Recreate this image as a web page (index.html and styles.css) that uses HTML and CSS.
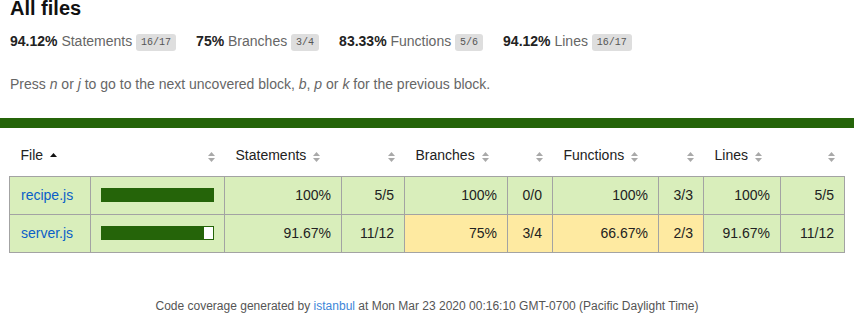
FILE: index.html
```html
<!DOCTYPE html>
<html lang="en">
<head>
<meta charset="utf-8">
<title>Code coverage report for All files</title>
<link rel="stylesheet" href="styles.css">
</head>
<body>
<div class="header">
  <h1>All files</h1>
  <div class="summary">
    <div class="stat"><span class="strong">94.12%</span> <span class="quiet">Statements</span> <span class="fraction">16/17</span></div>
    <div class="stat"><span class="strong">75%</span> <span class="quiet">Branches</span> <span class="fraction">3/4</span></div>
    <div class="stat"><span class="strong">83.33%</span> <span class="quiet">Functions</span> <span class="fraction">5/6</span></div>
    <div class="stat"><span class="strong">94.12%</span> <span class="quiet">Lines</span> <span class="fraction">16/17</span></div>
  </div>
  <p class="quiet hint">Press <em>n</em> or <em>j</em> to go to the next uncovered block, <em>b</em>, <em>p</em> or <em>k</em> for the previous block.</p>
</div>
<div class="status-line"></div>
<div class="table-wrap">
  <table class="coverage-summary">
    <colgroup>
      <col class="w-file"><col class="w-pic"><col class="w-spct"><col class="w-sabs"><col class="w-bpct"><col class="w-babs"><col class="w-fpct"><col class="w-fabs"><col class="w-lpct"><col class="w-labs">
    </colgroup>
    <thead>
      <tr>
        <th class="file">File<svg class="sorter sorted" width="7" height="10" viewBox="0 0 7 10"><polygon points="0,4 3.5,0 7,4"/></svg></th>
        <th class="pic"><svg class="sorter" width="7" height="10" viewBox="0 0 7 10"><polygon points="0,4 3.5,0 7,4"/><polygon points="0,6 3.5,10 7,6"/></svg></th>
        <th class="pct">Statements<svg class="sorter" width="7" height="10" viewBox="0 0 7 10"><polygon points="0,4 3.5,0 7,4"/><polygon points="0,6 3.5,10 7,6"/></svg></th>
        <th class="abs"><svg class="sorter" width="7" height="10" viewBox="0 0 7 10"><polygon points="0,4 3.5,0 7,4"/><polygon points="0,6 3.5,10 7,6"/></svg></th>
        <th class="pct">Branches<svg class="sorter" width="7" height="10" viewBox="0 0 7 10"><polygon points="0,4 3.5,0 7,4"/><polygon points="0,6 3.5,10 7,6"/></svg></th>
        <th class="abs"><svg class="sorter" width="7" height="10" viewBox="0 0 7 10"><polygon points="0,4 3.5,0 7,4"/><polygon points="0,6 3.5,10 7,6"/></svg></th>
        <th class="pct">Functions<svg class="sorter" width="7" height="10" viewBox="0 0 7 10"><polygon points="0,4 3.5,0 7,4"/><polygon points="0,6 3.5,10 7,6"/></svg></th>
        <th class="abs"><svg class="sorter" width="7" height="10" viewBox="0 0 7 10"><polygon points="0,4 3.5,0 7,4"/><polygon points="0,6 3.5,10 7,6"/></svg></th>
        <th class="pct">Lines<svg class="sorter" width="7" height="10" viewBox="0 0 7 10"><polygon points="0,4 3.5,0 7,4"/><polygon points="0,6 3.5,10 7,6"/></svg></th>
        <th class="abs"><svg class="sorter" width="7" height="10" viewBox="0 0 7 10"><polygon points="0,4 3.5,0 7,4"/><polygon points="0,6 3.5,10 7,6"/></svg></th>
      </tr>
    </thead>
    <tbody>
      <tr>
        <td class="file high"><a href="#">recipe.js</a></td>
        <td class="pic high"><div class="chart"><div class="cover-fill" style="width:100%"></div><div class="cover-empty" style="width:0%"></div></div></td>
        <td class="pct high">100%</td>
        <td class="abs high">5/5</td>
        <td class="pct high">100%</td>
        <td class="abs high">0/0</td>
        <td class="pct high">100%</td>
        <td class="abs high">3/3</td>
        <td class="pct high">100%</td>
        <td class="abs high">5/5</td>
      </tr>
      <tr>
        <td class="file high"><a href="#">server.js</a></td>
        <td class="pic high"><div class="chart"><div class="cover-fill" style="width:91.67%"></div><div class="cover-empty" style="width:8.33%"></div></div></td>
        <td class="pct high">91.67%</td>
        <td class="abs high">11/12</td>
        <td class="pct medium">75%</td>
        <td class="abs medium">3/4</td>
        <td class="pct medium">66.67%</td>
        <td class="abs medium">2/3</td>
        <td class="pct high">91.67%</td>
        <td class="abs high">11/12</td>
      </tr>
    </tbody>
  </table>
</div>
<div class="footer quiet">Code coverage generated by <a href="#">istanbul</a> at Mon Mar 23 2020 00:16:10 GMT-0700 (Pacific Daylight Time)</div>
</body>
</html>
```

FILE: styles.css
```css
html, body {
  margin: 0;
  padding: 0;
}
body {
  font-family: "Liberation Sans", Arial, Helvetica, sans-serif;
  font-size: 14px;
  color: #333;
  background: #fff;
}
*, *::before, *::after { box-sizing: border-box; }

a { color: #0a5fc8; text-decoration: none; }

.header { padding: 0 10px; }

h1 {
  font-size: 20px;
  line-height: 16px;
  margin: 0;
  color: #111;
}

.summary {
  display: flex;
  gap: 20px;
  padding-top: 17px;
  line-height: 16px;
}
.strong { font-weight: bold; color: #222; }
.quiet { color: #666; }

.fraction {
  display: inline-block;
  font-family: "Liberation Mono", "DejaVu Sans Mono", monospace;
  font-size: 10px;
  line-height: 11px;
  color: #555;
  background: #dedede;
  padding: 3px 5px;
  border-radius: 3px;
  vertical-align: middle;
}

.hint {
  margin: 25px 0 26px;
  line-height: 16px;
}

.status-line {
  height: 10px;
  background: #256409;
}

.table-wrap { padding: 9px 10px 10px 9px; }

.coverage-summary {
  border-collapse: collapse;
  width: 100%;
  table-layout: fixed;
}
.w-file { width: 81px; }
.w-pic { width: 134px; }
.w-spct { width: 117px; }
.w-sabs { width: 63px; }
.w-bpct { width: 103px; }
.w-babs { width: 45px; }
.w-fpct { width: 106px; }
.w-fabs { width: 45px; }
.w-lpct { width: 77px; }
.w-labs { width: 64px; }

.coverage-summary th {
  text-align: left;
  font-weight: normal;
  white-space: nowrap;
  padding: 10px 10px 12px 11px;
  line-height: 17px;
  color: #222;
}
.coverage-summary th.pic,
.coverage-summary th.abs,
.coverage-summary td.pct,
.coverage-summary td.abs { text-align: right; }

.coverage-summary tbody { border: 1px solid #a3a3a3; }
.coverage-summary tbody tr { border-bottom: 1px solid #a3a3a3; }
.coverage-summary td {
  padding: 10px;
  line-height: 17px;
  border-right: 1px solid #a3a3a3;
  white-space: nowrap;
  color: #222;
}
.coverage-summary td.file { padding-left: 11px; }
.coverage-summary td:last-child { border-right: none; }

.sorter {
  display: inline-block;
  margin-left: 7px;
  vertical-align: -2px;
  fill: #a9a9a9;
}
.sorter.sorted { fill: #111; vertical-align: -3px; }

.high { background: #d9eebb; }
.medium { background: #feeaa1; }

.chart {
  display: flex;
  border: 1px solid #256409;
  height: 14px;
}
.cover-fill { background: #256409; height: 12px; }
.cover-empty { background: #fff; height: 12px; }

.footer {
  text-align: center;
  font-size: 12px;
  line-height: 14px;
  padding-top: 36px;
  color: #555;
}
.footer a { color: #3d86d8; }
```
